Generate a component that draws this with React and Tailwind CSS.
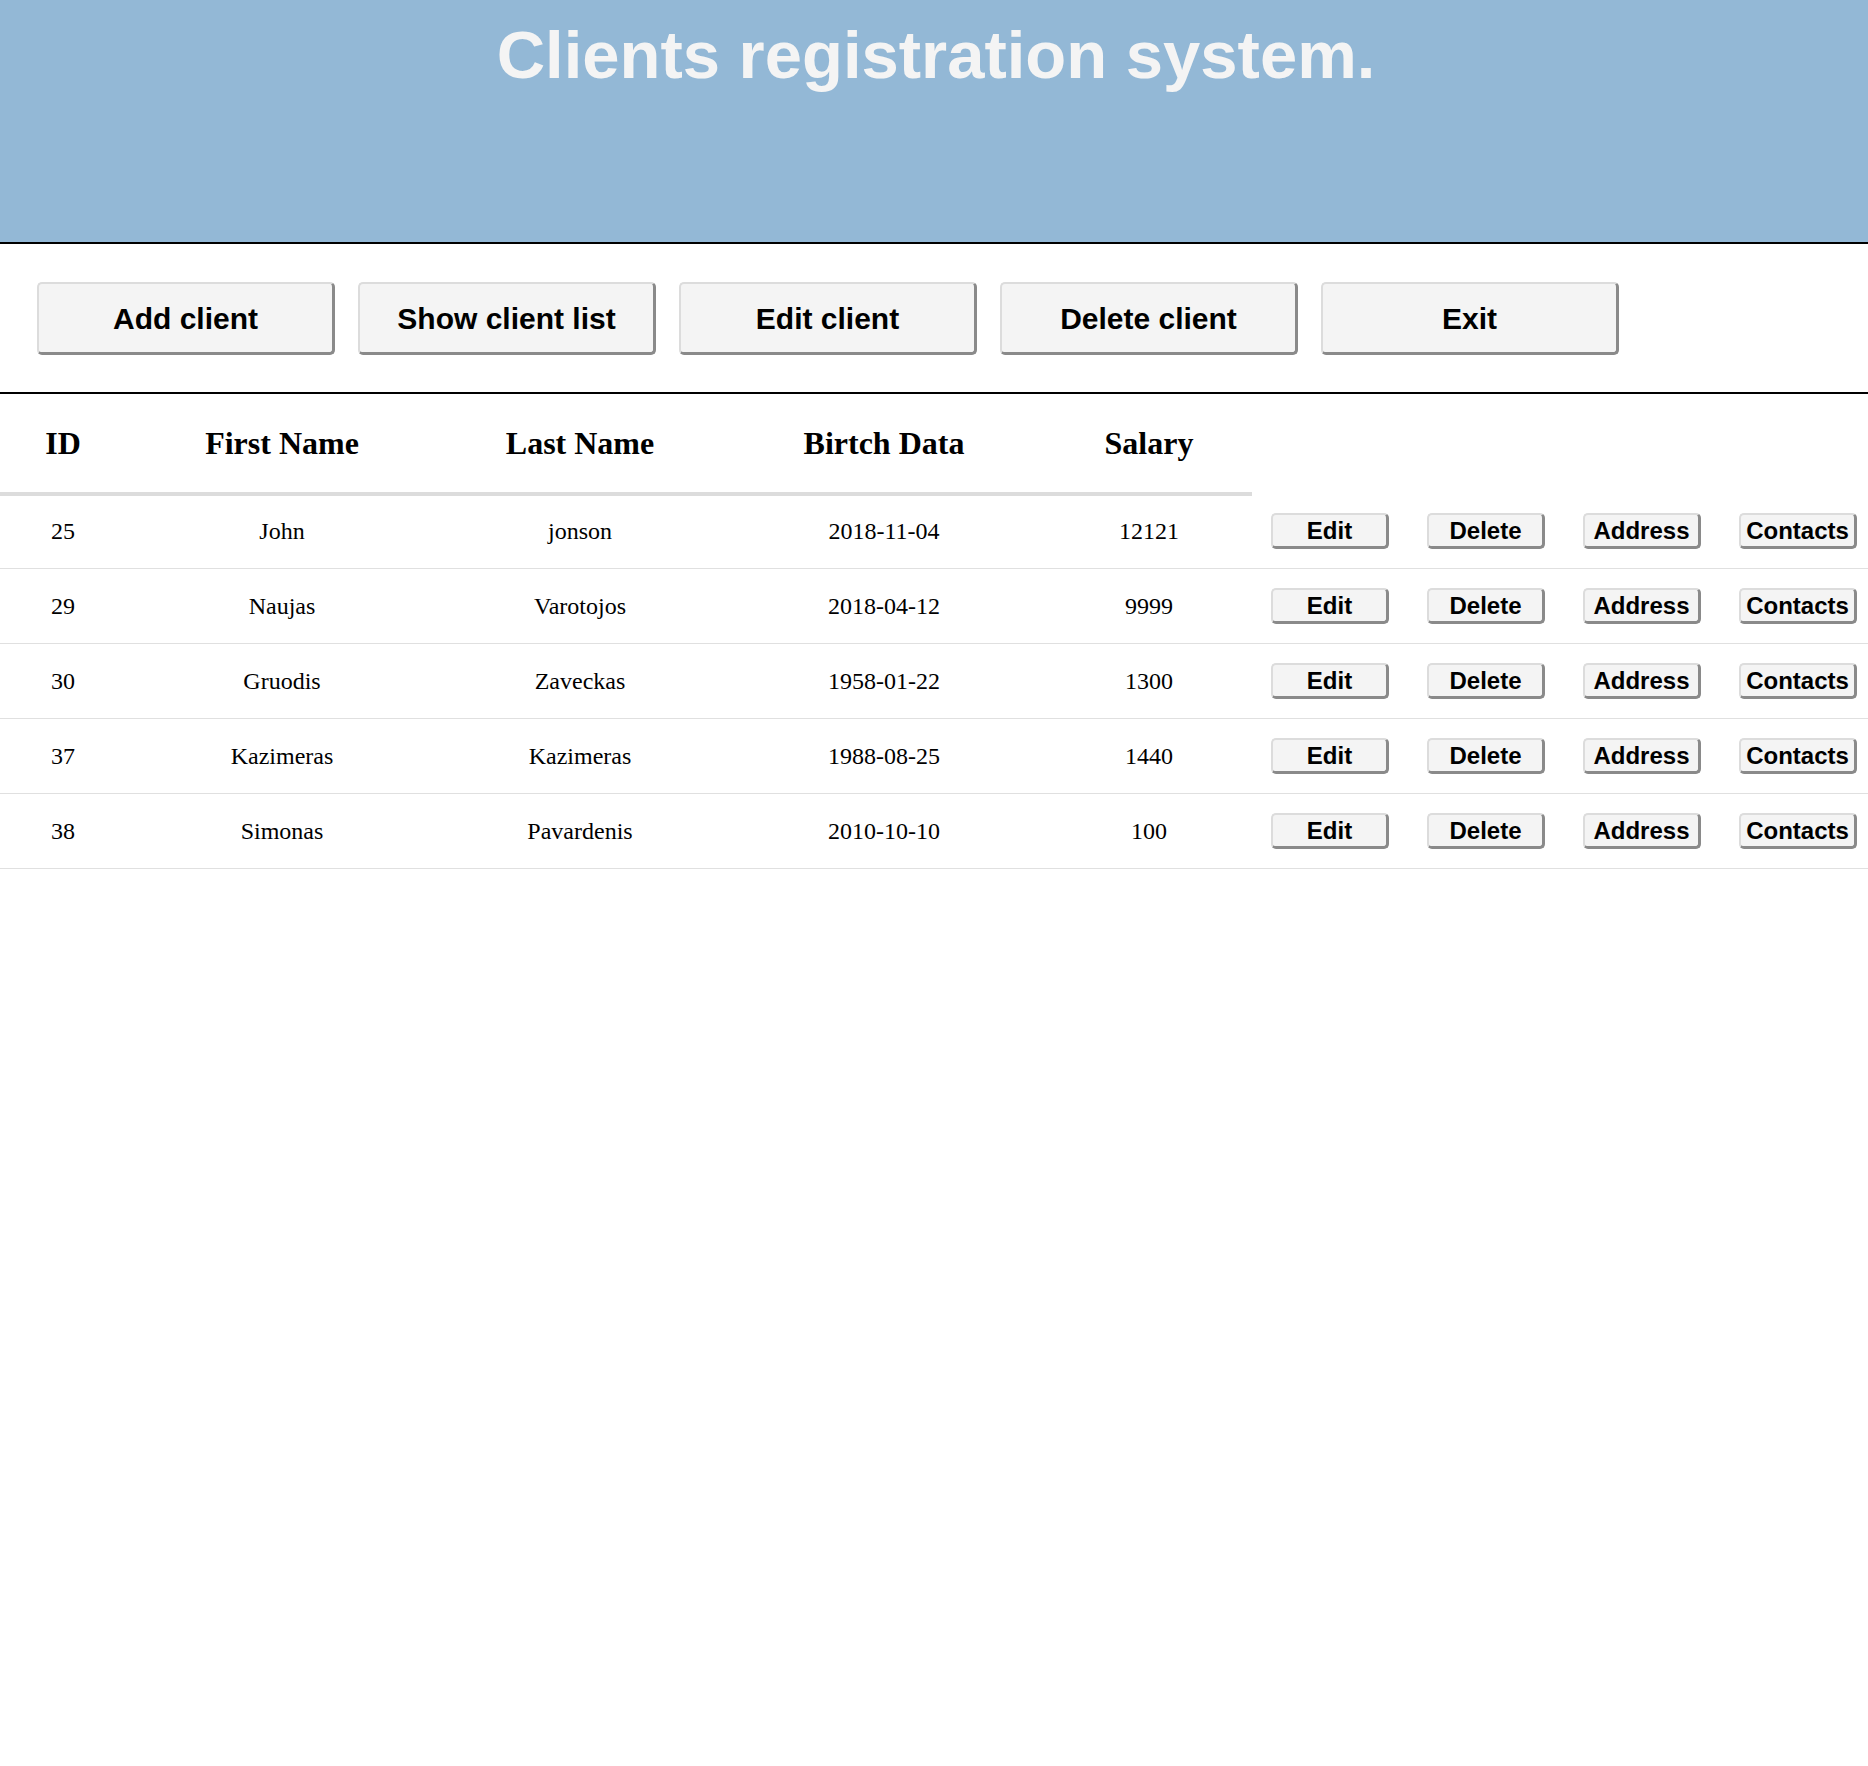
const menu = ["Add client", "Show client list", "Edit client", "Delete client", "Exit"];

const columns = [
  { title: "ID", w: "w-[126px]" },
  { title: "First Name", w: "w-[312px]" },
  { title: "Last Name", w: "w-[284px]" },
  { title: "Birtch Data", w: "w-[324px]" },
  { title: "Salary", w: "w-[206px]" },
];

const clients = [
  [25, "John", "jonson", "2018-11-04", 12121],
  [29, "Naujas", "Varotojos", "2018-04-12", 9999],
  [30, "Gruodis", "Zaveckas", "1958-01-22", 1300],
  [37, "Kazimeras", "Kazimeras", "1988-08-25", 1440],
  [38, "Simonas", "Pavardenis", "2010-10-10", 100],
];

const actions = ["Edit", "Delete", "Address", "Contacts"];

const App = () => {
  return (
    <div className="min-h-[1766px] bg-white text-black">
      {/* header */}
      <header className="h-[244px] bg-[#93b8d6] border-b-2 border-black pt-[16px] pl-[4px]">
        <h1 className="text-center text-[67px] leading-[78px] font-bold text-[#f4f4f4] font-['Liberation_Sans',Arial,sans-serif]">
          Clients registration system.
        </h1>
      </header>

      {/* menu */}
      <nav className="flex gap-[23px] pl-[37px] pt-[38px] pb-[37px] border-b-2 border-black">
        {menu.map((item) => (
          <button
            key={item}
            className="w-[298px] h-[73px] rounded-[5px] bg-[#f4f4f4] border-t-2 border-l-2 border-r-[3px] border-b-[3px] border-t-[#dcdcdc] border-l-[#dcdcdc] border-r-[#8a8a8a] border-b-[#8a8a8a] text-[30px] font-bold font-['Liberation_Sans',Arial,sans-serif]"
          >
            {item}
          </button>
        ))}
      </nav>

      {/* table */}
      <div className="font-['Liberation_Serif','Times_New_Roman',serif]">
        <div className="flex w-[1252px] h-[102px] border-b-4 border-[#dcdcdc]">
          {columns.map((c) => (
            <div
              key={c.title}
              className={`${c.w} shrink-0 flex items-center justify-center text-[32px] font-bold`}
            >
              {c.title}
            </div>
          ))}
        </div>

        {clients.map((row, i) => (
          <div
            key={row[0]}
            className={`flex items-center border-b border-[#e0e0e0] ${i === 0 ? "h-[73px] pb-[2px]" : "h-[75px]"}`}
          >
            {row.map((cell, j) => (
              <div key={j} className={`${columns[j].w} shrink-0 text-center text-[24px]`}>
                {cell}
              </div>
            ))}
            {actions.map((a, k) => (
              <div key={a} className={`${k === 3 ? "w-[148px]" : "w-[156px]"} shrink-0 pl-[19px]`}>
                <button className="w-[118px] h-[36px] rounded-[5px] bg-[#f4f4f4] border-t-2 border-l-2 border-r-[3px] border-b-[3px] border-t-[#dcdcdc] border-l-[#dcdcdc] border-r-[#8a8a8a] border-b-[#8a8a8a] text-[24px] leading-none font-bold font-['Liberation_Sans',Arial,sans-serif]">
                  {a}
                </button>
              </div>
            ))}
          </div>
        ))}
      </div>
    </div>
  );
};

export default App;
